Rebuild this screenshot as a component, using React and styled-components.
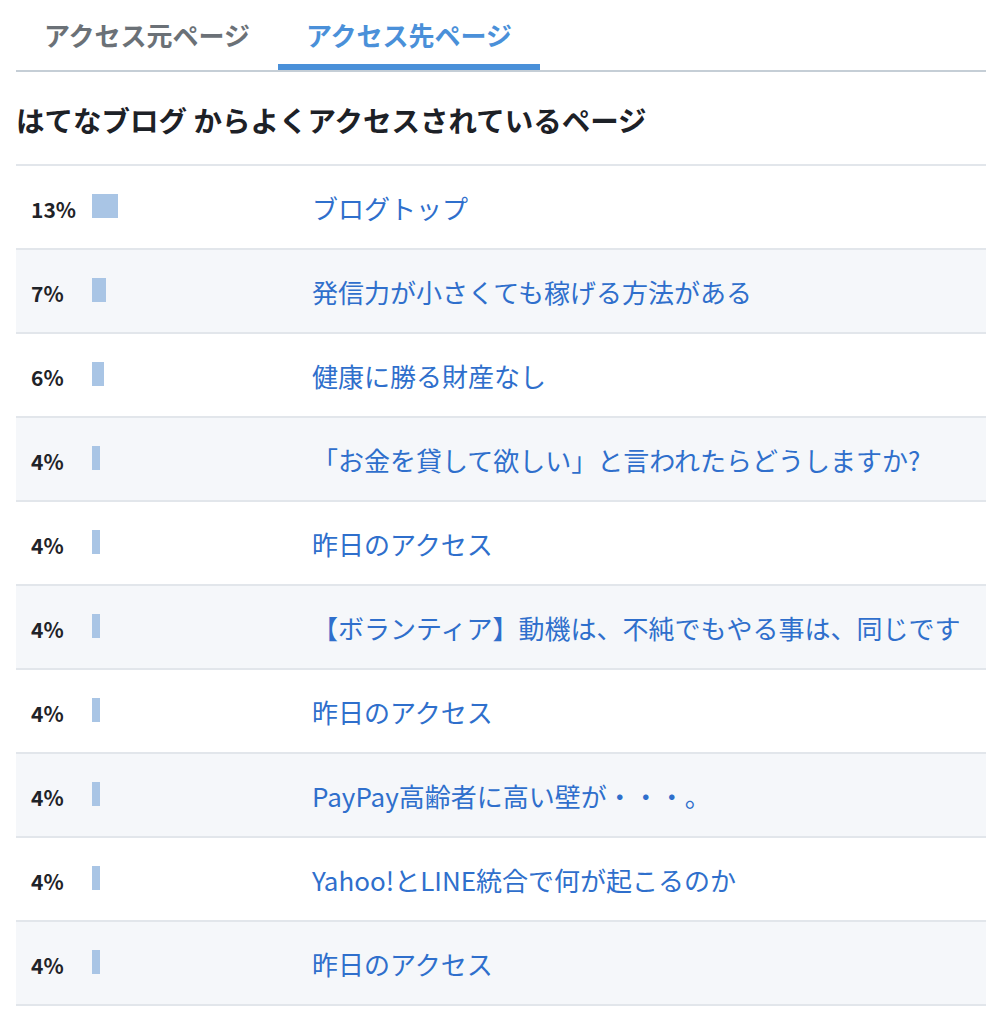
import React from "react";
import styled, { createGlobalStyle } from "styled-components";

const GlobalStyle = createGlobalStyle`
  html, body {
    margin: 0;
    padding: 0;
    background: #ffffff;
  }
  body {
    font-family: "Noto Sans CJK JP", "Noto Sans", sans-serif;
  }
`;

const Page = styled.div`
  padding-left: 16px;
`;

const TabBar = styled.div`
  display: flex;
  border-bottom: 2px solid #c5ced6;
`;

const Tab = styled.div`
  display: flex;
  align-items: center;
  justify-content: center;
  width: 262px;
  height: 70px;
  padding-bottom: 2px;
  box-sizing: border-box;
  font-size: 26px;
  font-weight: 700;
  color: ${({ active }) => (active ? "#4a90d9" : "#6b7177")};
  box-shadow: ${({ active }) => (active ? "inset 0 -6px 0 #4a90d9" : "none")};
  cursor: pointer;
`;

const Heading = styled.h2`
  margin: 0;
  padding: 28px 0 24px;
  font-size: 28.5px;
  line-height: 40px;
  font-weight: 700;
  color: #1d2127;
`;

const List = styled.ul`
  margin: 0;
  padding: 0;
  list-style: none;
  border-bottom: 2px solid #e2e6eb;
`;

const Row = styled.li`
  display: flex;
  align-items: center;
  height: 84px;
  border-top: 2px solid #e2e6eb;
  box-sizing: border-box;

  &:nth-child(even) {
    background: #f5f7fa;
  }
`;

const Ratio = styled.div`
  display: flex;
  align-items: center;
  width: 296px;
  padding-left: 15px;
  box-sizing: border-box;
  flex-shrink: 0;
`;

const Percent = styled.span`
  width: 61px;
  font-size: 21px;
  font-weight: 700;
  color: #1f2328;
  padding-top: 4px;
`;

const Bar = styled.span`
  display: block;
  height: 24px;
  margin-top: -2px;
  background: #a9c5e5;
`;

const PageLink = styled.a`
  font-size: 26px;
  color: #2f6fcc;
  text-decoration: none;
  white-space: nowrap;
`;

const pages = [
  { pct: 13, title: "ブログトップ" },
  { pct: 7, title: "発信力が小さくても稼げる方法がある" },
  { pct: 6, title: "健康に勝る財産なし" },
  { pct: 4, title: "「お金を貸して欲しい」と言われたらどうしますか?" },
  { pct: 4, title: "昨日のアクセス" },
  { pct: 4, title: "【ボランティア】動機は、不純でもやる事は、同じです" },
  { pct: 4, title: "昨日のアクセス" },
  { pct: 4, title: "PayPay高齢者に高い壁が・・・。" },
  { pct: 4, title: "Yahoo!とLINE統合で何が起こるのか" },
  { pct: 4, title: "昨日のアクセス" },
];

export default function App() {
  return (
    <Page>
      <GlobalStyle />
      <TabBar>
        <Tab>アクセス元ページ</Tab>
        <Tab active>アクセス先ページ</Tab>
      </TabBar>
      <Heading>はてなブログ からよくアクセスされているページ</Heading>
      <List>
        {pages.map((p, i) => (
          <Row key={i}>
            <Ratio>
              <Percent>{p.pct}%</Percent>
              <Bar style={{ width: p.pct * 2 }} />
            </Ratio>
            <PageLink href="#">{p.title}</PageLink>
          </Row>
        ))}
      </List>
    </Page>
  );
}
